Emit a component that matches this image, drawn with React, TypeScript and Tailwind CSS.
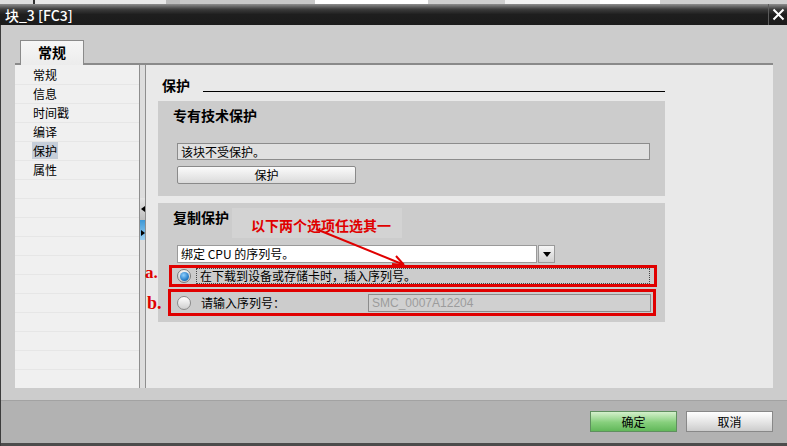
import React from 'react';

const navItems = ['常规', '信息', '时间戳', '编译', '保护', '属性'];

function RadioOn() {
  return (
    <div className="w-[14px] h-[14px] rounded-full border border-[#7a7a7a] bg-[linear-gradient(to_bottom,#f4f4f4,#c8c8c8)] flex items-center justify-center shrink-0">
      <div className="w-[9px] h-[9px] rounded-full bg-[radial-gradient(circle_at_40%_35%,#8fd0ff,#1a73c0_70%,#0d4f8c)]" />
    </div>
  );
}

function RadioOff() {
  return (
    <div className="w-[14px] h-[14px] rounded-full border border-[#8a8a8a] bg-[linear-gradient(to_bottom,#ffffff,#cfcfcf)] shrink-0" />
  );
}

export default function App() {
  const rows = Array.from({ length: 17 });
  return (
    <div className="w-[787px] h-[446px] relative overflow-hidden bg-[#cccccc] flex flex-col font-['Liberation_Sans','Noto_Sans_CJK_SC',sans-serif] text-[12px] text-black">
      {/* top strip */}
      <div className="h-[4px] flex shrink-0">
        <div className="w-[33px] bg-[#dedede]" />
        <div className="w-[2px] bg-[#333333]" />
        <div className="w-[131px] bg-[#e8e8e8]" />
        <div className="w-[14px] bg-[#bcbcbc]" />
        <div className="w-[135px] bg-[#c8c8c8]" />
        <div className="w-[113px] bg-[#ffffff]" />
        <div className="w-[77px] bg-[#cfcfcf]" />
        <div className="w-[95px] bg-[#f2f2f2]" />
        <div className="w-[60px] bg-[#ffffff]" />
        <div className="flex-1 bg-[#cfcfcf]" />
      </div>

      {/* title bar */}
      <div className="h-[21px] shrink-0 flex items-center bg-[linear-gradient(to_bottom,#8e8e8e_0%,#3c3c3c_25%,#1e1e1e_50%,#1b1b1b_100%)]">
        <span className="pl-[5px] text-white text-[14px] font-medium leading-none font-['Noto_Sans_CJK_SC','Liberation_Sans',sans-serif]">块_3 [FC3]</span>
        <div className="ml-auto h-full w-[19px] border-l border-[#5a5a5a] flex items-center justify-center">
          <svg width="13" height="13" viewBox="0 0 13 13">
            <path d="M1.5 1.5 L11.5 11.5 M11.5 1.5 L1.5 11.5" stroke="#ffffff" strokeWidth="2" />
          </svg>
        </div>
      </div>

      {/* body */}
      <div className="flex-1 flex flex-col pl-[14px] pr-[14px] pt-[15px] border-l border-[#3c3c3c]">
        {/* tab row */}
        <div className="h-[23px] flex">
          <div className="ml-[5px] w-[64px] h-[25px] relative z-10 border border-b-0 border-[#8a8a8a] bg-[linear-gradient(to_bottom,#f6f6f6,#ececec)] flex items-start justify-center pt-[3px]">
            <span className="text-[14px] font-bold leading-[16px] font-['Noto_Sans_CJK_SC',sans-serif]">常规</span>
          </div>
        </div>

        {/* panel */}
        <div className="h-[325px] border-t-[2px] border-[#8a8a8a] flex">
          {/* nav */}
          <div className="w-[124px] bg-[#f0f0f0] pt-[1px] overflow-hidden">
            {rows.map((_, i) => (
              <div key={i} className="h-[19px] border-b border-[#e6e6e6] flex items-center pl-[17px]">
                {navItems[i] && (
                  <span
                    className={
                      'leading-[17px] px-[1px] -mt-[2px] font-[\'Noto_Sans_CJK_SC\',sans-serif] ' +
                      (i === 4 ? 'bg-[#c6ced9]' : '')
                    }
                  >
                    {navItems[i]}
                  </span>
                )}
              </div>
            ))}
          </div>

          {/* splitter */}
          <div className="w-[7px] border-l border-r border-[#8e8e8e] bg-[#dddddd] flex flex-col">
            <div className="h-[133px]" />
            <div className="h-[22px] bg-[linear-gradient(to_bottom,#e4e4e4,#bdbdbd)] flex items-center justify-center">
              <div className="w-0 h-0 border-t-[3px] border-b-[3px] border-r-[4px] border-t-transparent border-b-transparent border-r-black" />
            </div>
            <div className="h-[20px] bg-[linear-gradient(to_bottom,#3d98d6,#9dd0f2)] flex items-end justify-center pb-[4px]">
              <div className="w-0 h-0 border-t-[3px] border-b-[3px] border-l-[4px] border-t-transparent border-b-transparent border-l-black" />
            </div>
          </div>

          {/* content */}
          <div className="flex-1 bg-[#e9e9e9] pl-[12px] flex flex-col font-['Noto_Sans_CJK_SC','Liberation_Sans',sans-serif]">
            <div className="w-[507px] flex flex-col">
              {/* heading */}
              <div className="mt-[12px] h-[16px] flex items-end pl-[4px]">
                <span className="text-[14px] font-bold leading-[16px]">保护</span>
                <div className="flex-1 h-px bg-black ml-[13px] mb-[1px]" />
              </div>

              {/* section 1 */}
              <div className="mt-[8px] h-[95px] bg-[#cccccc] flex flex-col pl-[15px]">
                <div className="pt-[6px] h-[22px] text-[14px] font-bold leading-[16px]">专有技术保护</div>
                <div className="mt-[20px] ml-[4px] w-[473px] h-[17px] bg-[#e0e0e0] border border-[#8c8c8c] flex items-center pl-[3px] leading-none">
                  该块不受保护。
                </div>
                <div className="mt-[6px] ml-[4px] w-[179px] h-[18px] border border-[#8a8a8a] rounded-[2px] bg-[linear-gradient(to_bottom,#fbfbfb,#dadada)] flex items-center justify-center leading-none">
                  保护
                </div>
              </div>

              {/* section 2 */}
              <div className="mt-[7px] h-[119px] bg-[#cccccc] flex flex-col pl-[15px]">
                <div className="flex h-[22px]">
                  <div className="pt-[6px] text-[14px] font-bold leading-[16px]">复制保护</div>
                  <div className="ml-[3px] mt-[5px] w-[170px] h-[30px] bg-[#d3d3d3]" />
                </div>
                <div className="mt-[20px] ml-[4px] flex h-[18px] relative">
                  <div className="w-[360px] h-[18px] bg-white border border-[#9a9a9a] flex items-center pl-[3px] leading-none">
                    绑定 CPU 的序列号。
                  </div>
                  <div className="ml-[1px] w-[17px] h-[18px] border border-[#9a9a9a] bg-[linear-gradient(to_bottom,#f6f6f6,#d0d0d0)] flex items-center justify-center">
                    <div className="w-0 h-0 border-l-[4px] border-r-[4px] border-t-[5px] border-l-transparent border-r-transparent border-t-black" />
                  </div>
                </div>

                {/* row a */}
                <div className="mt-[2px] -ml-[4px] w-[488px] h-[22px] border-[3px] border-[#e00000] flex items-center pl-[5px] pr-[4px]">
                  <RadioOn />
                  <div className="ml-[5px] flex-1 h-[16px] border border-dotted border-[#444444] flex items-center pl-[3px] leading-none">
                    在下载到设备或存储卡时，插入序列号。
                  </div>
                </div>

                {/* row b */}
                <div className="mt-[2px] -ml-[5px] w-[488px] h-[27px] border-[3px] border-[#e00000] flex items-center pl-[6px] pr-[2px]">
                  <RadioOff />
                  <span className="ml-[10px] leading-none">请输入序列号：</span>
                  <div className="ml-auto w-[283px] h-[18px] bg-[#d0d0d0] border border-[#8c8c8c] flex items-center pl-[3px] text-[#9c9c9c] leading-none font-['Liberation_Sans',sans-serif]">
                    SMC_0007A12204
                  </div>
                </div>
              </div>
            </div>
          </div>
        </div>
      </div>

      {/* footer */}
      <div className="h-[46px] shrink-0 flex flex-col border-l border-[#3c3c3c]">
        <div className="h-[43px] border-t border-[#a2a2a2] bg-[#b2b2b2] flex items-start justify-end pr-[14px] pt-[10px] gap-[9px] font-['Noto_Sans_CJK_SC',sans-serif]">
          <div className="w-[87px] h-[21px] border border-[#5f8f5f] bg-[linear-gradient(to_bottom,#d4f0cc,#86cf7c_55%,#62b85a)] flex items-center justify-center leading-none">
            确定
          </div>
          <div className="w-[87px] h-[21px] border border-[#888888] bg-[linear-gradient(to_bottom,#ffffff,#e4e4e4_55%,#cccccc)] flex items-center justify-center leading-none">
            取消
          </div>
        </div>
        <div className="h-[3px] bg-[#4c4c4c]" />
      </div>

      {/* annotations */}
      <div className="absolute left-[145px] top-[263px] text-[17px] font-bold text-[#e00000] leading-[20px] font-['Liberation_Serif',serif]">a.</div>
      <div className="absolute left-[147px] top-[293px] text-[18px] font-bold text-[#e00000] leading-[20px] font-['Liberation_Serif',serif]">b.</div>
      <div className="absolute left-[251px] top-[216px] text-[14px] font-bold text-[#e00000] leading-[18px] font-['Noto_Sans_CJK_SC',sans-serif]">以下两个选项任选其一</div>
      <svg className="absolute left-0 top-0" width="787" height="446" viewBox="0 0 787 446">
        <line x1="316" y1="229" x2="402" y2="264" stroke="#e00000" strokeWidth="2" />
        <path d="M404 265 L392 264 M404 265 L396 256" stroke="#e00000" strokeWidth="2" fill="none" />
      </svg>
    </div>
  );
}
